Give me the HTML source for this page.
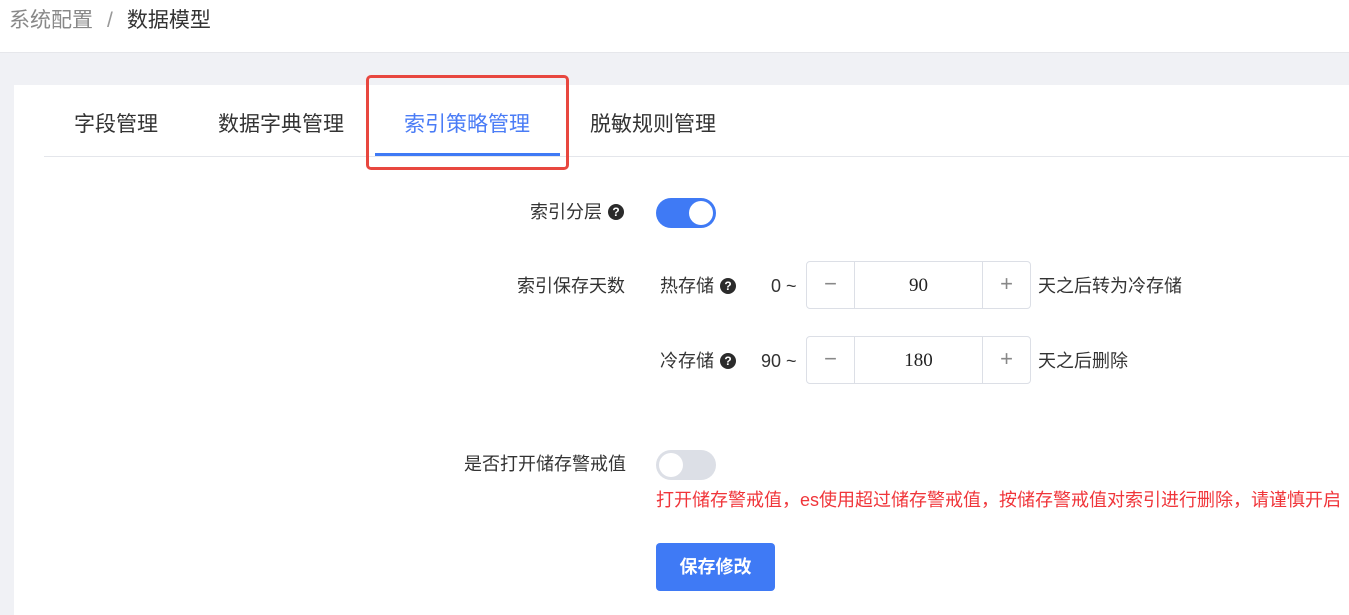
<!DOCTYPE html>
<html><head><meta charset="utf-8"><style>
*{margin:0;padding:0;box-sizing:border-box}
body{width:1349px;height:602px;overflow:hidden;background:#f0f1f5;font-family:"Liberation Sans","Noto Sans CJK SC",sans-serif;color:#333;position:relative}
.a{position:absolute;white-space:nowrap;line-height:1.3}
.top{position:absolute;left:0;top:0;width:1349px;height:53px;background:#fff;border-bottom:1px solid #e6e7eb}
.card{position:absolute;left:14px;top:85px;width:1340px;height:530px;background:#fff}
.q{display:inline-block;width:16px;height:16px;border-radius:50%;background:#2b2b2b;color:#fff;font-size:12px;font-weight:bold;text-align:center;line-height:16px;vertical-align:2px;margin-left:6px;font-family:"Liberation Sans",sans-serif}
.num{position:absolute;left:806px;width:225px;height:48px;border:1px solid #dcdfe6;border-radius:4px;background:#fff}
.num .m,.num .p{position:absolute;top:0;width:48px;height:46px;line-height:44px;text-align:center;color:#888;font-size:22px}
.num .m{left:0;border-right:1px solid #dcdfe6}
.num .p{right:0;border-left:1px solid #dcdfe6}
.num .v{position:absolute;left:48px;right:48px;top:0;line-height:48px;text-align:center;font-size:19px;color:#222;font-family:"Liberation Serif","Noto Sans CJK SC",serif}
.f{font-size:18px}
</style></head><body>
<div class="top"></div>
<div class="a" style="left:9px;top:7px;font-size:21px;color:#888">系统配置<span style="margin:0 14px;color:#999">/</span><span style="color:#333">数据模型</span></div>
<div class="card"></div>
<div class="a" style="left:44px;top:156px;width:1305px;height:1px;background:#e4e6eb"></div>
<div class="a" style="left:74px;top:111px;font-size:21px">字段管理</div>
<div class="a" style="left:218px;top:111px;font-size:21px">数据字典管理</div>
<div class="a" style="left:404px;top:111px;font-size:21px;color:#4a7cf6">索引策略管理</div>
<div class="a" style="left:375px;top:153px;width:185px;height:3px;background:#3f7af5"></div>
<div class="a" style="left:590px;top:111px;font-size:21px">脱敏规则管理</div>
<div class="a" style="left:366px;top:75px;width:203px;height:95px;border:3px solid #e8473f;border-radius:5px"></div>

<div class="a f" style="left:530px;top:201px">索引分层<span class="q">?</span></div>
<div class="a" style="left:656px;top:198px;width:60px;height:30px;border-radius:15px;background:#3f7af5"><div style="position:absolute;right:3px;top:3px;width:24px;height:24px;border-radius:50%;background:#fff"></div></div>

<div class="a f" style="left:517px;top:275px">索引保存天数</div>
<div class="a f" style="left:660px;top:275px">热存储<span class="q">?</span></div>
<div class="a f" style="left:771px;top:275px">0 ~</div>
<div class="num" style="top:261px"><div class="m">−</div><div class="v">90</div><div class="p">+</div></div>
<div class="a f" style="left:1038px;top:275px">天之后转为冷存储</div>

<div class="a f" style="left:660px;top:350px">冷存储<span class="q">?</span></div>
<div class="a f" style="left:761px;top:350px">90 ~</div>
<div class="num" style="top:336px"><div class="m">−</div><div class="v">180</div><div class="p">+</div></div>
<div class="a f" style="left:1038px;top:350px">天之后删除</div>

<div class="a f" style="left:464px;top:453px">是否打开储存警戒值</div>
<div class="a" style="left:656px;top:450px;width:60px;height:30px;border-radius:15px;background:#dcdfe6"><div style="position:absolute;left:3px;top:3px;width:24px;height:24px;border-radius:50%;background:#fff"></div></div>
<div class="a f" style="left:656px;top:489px;color:#f0353a">打开储存警戒值，es使用超过储存警戒值，按储存警戒值对索引进行删除，请谨慎开启</div>
<div class="a" style="left:656px;top:543px;width:119px;height:48px;border-radius:4px;background:#3f7af5;color:#fff;font-size:18px;font-weight:bold;text-align:center;line-height:48px">保存修改</div>
</body></html>
